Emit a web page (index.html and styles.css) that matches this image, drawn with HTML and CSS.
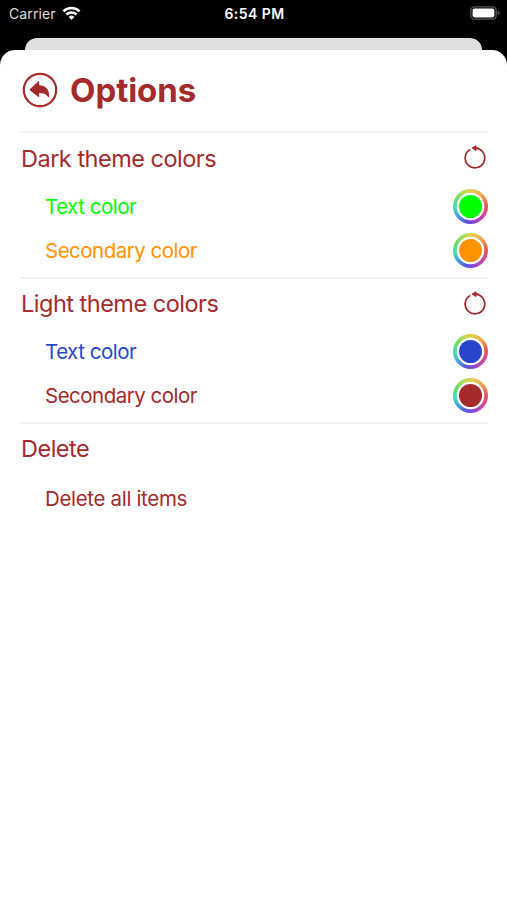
FILE: index.html
```html
<!DOCTYPE html>
<html lang="en">
<head>
<meta charset="utf-8">
<title>Options</title>
<link rel="stylesheet" href="styles.css">
</head>
<body>
<header class="status">
  <div class="carrier"><span>Carrier</span>
    <svg class="wifi" viewBox="0 0 18 14" width="19" height="14" fill="none" stroke="#fff" stroke-width="2.5"><path d="M.9 5.4a11.5 11.5 0 0 1 16.2 0M3.9 8.5a7.2 7.2 0 0 1 10.2 0"/><path d="M9 13.8 6.1 10.9a4.1 4.1 0 0 1 5.8 0z" fill="#fff" stroke="none"/></svg>
  </div>
  <span class="time">6:54 PM</span>
  <svg class="battery" viewBox="0 0 30 14" width="30" height="14"><rect x=".8" y=".8" width="25.4" height="12.4" rx="3.6" fill="none" stroke="#56565a" stroke-width="1.3"/><rect x="2.6" y="2.5" width="21.8" height="9" rx="2" fill="#fff"/><path d="M27.6 4.7q2 .8 2 2.3t-2 2.3z" fill="#56565a"/></svg>
</header>
<div class="behind"></div>
<main class="sheet">
  <div class="title">
    <svg viewBox="0 0 36 36" width="36" height="36"><circle cx="18" cy="18" r="16.2" fill="none" stroke="currentColor" stroke-width="2.2"/><path d="M7.8 17.3 16.2 9.4q1-.8 1 .5v3.3c6.4.1 10 4.1 10 11.1q0 1.8-1.2.4c-2.2-2.9-4.6-3.8-8.8-3.8v3.5q0 1.3-1 .4L7.8 18.2q-.5-.5 0-.9z" fill="currentColor"/></svg>
    <h1>Options</h1>
  </div>
  <section class="group">
    <div class="heading"><h2>Dark theme colors</h2>
      <svg class="reset" viewBox="0 0 24 26" width="24" height="26"><path d="M7.2 4.4A9.8 9.8 0 1 0 12.6 3.2" fill="none" stroke="currentColor" stroke-width="1.7"/><path d="M8.8 3 13 .6v1.7l3.2.9-3.2.9v1.7z" fill="currentColor" stroke="currentColor" stroke-width=".6"/></svg>
    </div>
    <div class="row green"><span class="label">Text color</span><span class="well"><i></i></span></div>
    <div class="row orange"><span class="label">Secondary color</span><span class="well"><i></i></span></div>
  </section>
  <section class="group light">
    <div class="heading"><h2>Light theme colors</h2>
      <svg class="reset" viewBox="0 0 24 26" width="24" height="26"><path d="M7.2 4.4A9.8 9.8 0 1 0 12.6 3.2" fill="none" stroke="currentColor" stroke-width="1.7"/><path d="M8.8 3 13 .6v1.7l3.2.9-3.2.9v1.7z" fill="currentColor" stroke="currentColor" stroke-width=".6"/></svg>
    </div>
    <div class="row blue"><span class="label">Text color</span><span class="well"><i></i></span></div>
    <div class="row"><span class="label">Secondary color</span><span class="well"><i></i></span></div>
  </section>
  <section class="group delete">
    <div class="heading"><h2>Delete</h2></div>
    <div class="row"><span class="label">Delete all items</span></div>
  </section>
</main>
</body>
</html>
```
FILE: styles.css
```css
* { box-sizing: border-box; }
body {
  margin: 0;
  height: 900px;
  overflow: hidden;
  display: flex;
  flex-direction: column;
  background: #000;
  font-family: Inter, "Liberation Sans", sans-serif;
}
.status {
  height: 38px;
  padding: 0 7px 11px 9px;
  display: grid;
  grid-template-columns: 1fr auto 1fr;
  align-items: center;
  color: #fff;
  font-size: 14px;
}
.carrier { display: flex; align-items: center; gap: 6px; color: #ddd; letter-spacing: .1px; }
.wifi { margin-top: -2px; }
.time { font-weight: 600; letter-spacing: .45px; }
.battery { justify-self: end; margin-top: -1px; }
.behind {
  height: 12px;
  margin: 0 25px;
  background: #dfdfdf;
  border-radius: 12px 12px 0 0;
}
.sheet {
  flex: 1;
  padding: 0 19px 0 20px;
  background: #fff;
  border-radius: 15px 15px 0 0;
  color: #a52a2a;
}
.title {
  height: 81px;
  padding: 0 0 1px 2px;
  display: flex;
  align-items: center;
  gap: 12px;
}
h1 { margin: 0; font-size: 33px; font-weight: 700; letter-spacing: -.05px; }
h2 { margin: 0; font-size: 23.5px; font-weight: 400; letter-spacing: -.5px; }
.group { height: 146px; border-top: 2px solid #f1f1f2; }
.light { height: 145px; }
.heading {
  height: 51px;
  padding: 0 1px 1px;
  display: flex;
  align-items: center;
  justify-content: space-between;
}
.light .heading { height: 50px; }
.delete .heading { height: 52px; padding-bottom: 3px; }
.row {
  height: 44px;
  padding-left: 25px;
  display: flex;
  align-items: center;
  justify-content: space-between;
  color: #a52a2a;
}
.label { font-size: 20.5px; letter-spacing: -.5px; }
.delete .label { letter-spacing: -.33px; }
.well {
  width: 35px;
  height: 35px;
  display: grid;
  place-items: center;
  border-radius: 50%;
  background: radial-gradient(circle, #fff 13.4px, transparent 14.2px),
    conic-gradient(#e0d24c, #ecae50 40deg, #ee5555 85deg, #da4892 120deg, #9443d8 165deg, #5755df 195deg, #43a8dd 235deg, #45dfb0 265deg, #67df67 300deg, #b6dd55 335deg, #e0d24c);
}
.well i { width: 23px; height: 23px; border-radius: 50%; background: currentColor; }
.green { color: #0f0; }
.orange { color: #ff9300; }
.blue { color: #2746cb; }
```
